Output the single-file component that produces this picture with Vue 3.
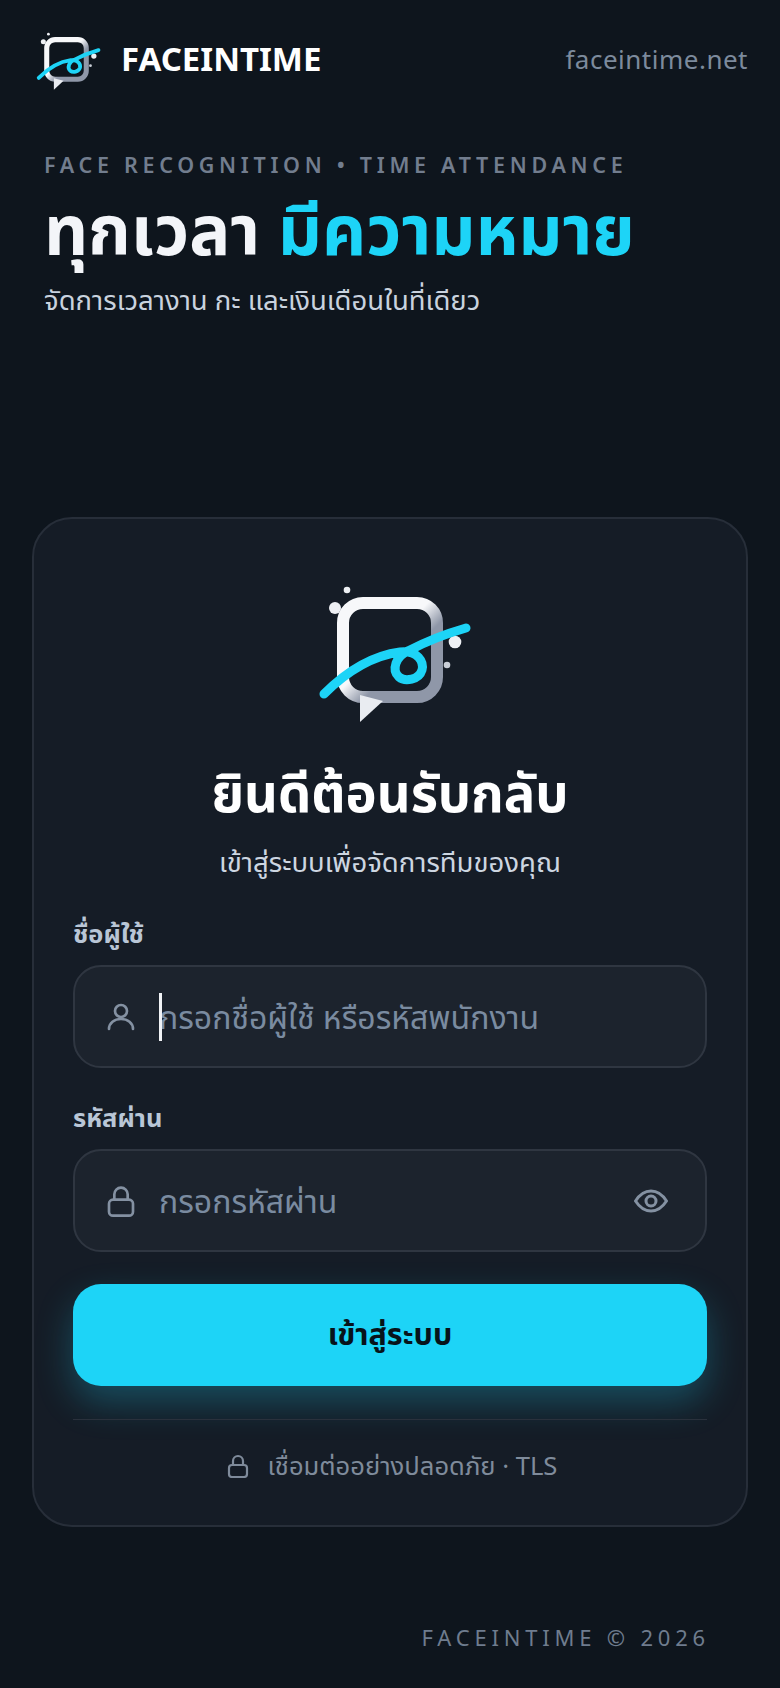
<script setup>
import { ref } from 'vue';

const username = ref('');
const password = ref('');
const showPassword = ref(false);
</script>

<template>
  <div class="page">
    <header class="topbar">
      <div class="brand">
        <svg class="logo-small" viewBox="8 15 164 140" xmlns="http://www.w3.org/2000/svg">
          <defs>
            <linearGradient id="frameA" x1="0" y1="0" x2="1" y2="1">
              <stop offset="0.45" stop-color="#f7f8fa" />
              <stop offset="0.62" stop-color="#8f97a8" />
            </linearGradient>
          </defs>
          <rect x="43" y="33" width="94" height="94" rx="20" fill="none" stroke="url(#frameA)" stroke-width="12" />
          <path d="M60 125 L83 131 L60 152 Z" fill="#e9ecf1" />
          <circle cx="35" cy="38" r="6" fill="#eef0f4" />
          <circle cx="47" cy="20" r="3.3" fill="#eef0f4" />
          <circle cx="155" cy="72" r="6.3" fill="#eef0f4" />
          <circle cx="147" cy="95" r="3.3" fill="#c9ced7" />
          <path d="M24 124 C44 104 70 86 100 82 C118 80 124 92 122 100 C119 110 105 112 99 107 C91 100 96 86 108 81 C125 72 145 64 166 58" fill="none" stroke="#1dd4f7" stroke-width="9" stroke-linecap="round" />
        </svg>
        <span class="brand-name">FACEINTIME</span>
      </div>
      <span class="domain">faceintime.net</span>
    </header>

    <section class="hero">
      <p class="eyebrow">FACE RECOGNITION • TIME ATTENDANCE</p>
      <h1 class="headline">ทุกเวลา <span class="accent">มีความหมาย</span></h1>
      <p class="tagline">จัดการเวลางาน กะ และเงินเดือนในที่เดียว</p>
    </section>

    <main class="card">
      <svg class="logo-big" viewBox="8 15 164 140" xmlns="http://www.w3.org/2000/svg">
        <defs>
          <linearGradient id="frameB" x1="0" y1="0" x2="1" y2="1">
            <stop offset="0.45" stop-color="#f7f8fa" />
            <stop offset="0.62" stop-color="#8f97a8" />
          </linearGradient>
        </defs>
        <rect x="43" y="33" width="94" height="94" rx="20" fill="none" stroke="url(#frameB)" stroke-width="12" />
        <path d="M60 125 L83 131 L60 152 Z" fill="#e9ecf1" />
        <circle cx="35" cy="38" r="6" fill="#eef0f4" />
        <circle cx="47" cy="20" r="3.3" fill="#eef0f4" />
        <circle cx="155" cy="72" r="6.3" fill="#eef0f4" />
        <circle cx="147" cy="95" r="3.3" fill="#c9ced7" />
        <path d="M24 124 C44 104 70 86 100 82 C118 80 124 92 122 100 C119 110 105 112 99 107 C91 100 96 86 108 81 C125 72 145 64 166 58" fill="none" stroke="#1dd4f7" stroke-width="9" stroke-linecap="round" />
      </svg>

      <h2 class="welcome">ยินดีต้อนรับกลับ</h2>
      <p class="welcome-sub">เข้าสู่ระบบเพื่อจัดการทีมของคุณ</p>

      <label class="field-label">ชื่อผู้ใช้</label>
      <div class="field">
        <svg class="field-icon" viewBox="0 0 24 24" fill="none" stroke="currentColor" stroke-width="2" stroke-linecap="round" stroke-linejoin="round">
          <circle cx="12" cy="7.500" r="4.500" />
          <path d="M3 21c0-4.500 4-7.500 9-7.500s9 3 9 7.500" />
        </svg>
        <span class="caret"></span>
        <input v-model="username" type="text" placeholder="กรอกชื่อผู้ใช้ หรือรหัสพนักงาน" />
      </div>

      <label class="field-label second">รหัสผ่าน</label>
      <div class="field">
        <svg class="field-icon" viewBox="0 0 24 24" fill="none" stroke="currentColor" stroke-width="2" stroke-linecap="round" stroke-linejoin="round">
          <rect x="3" y="11" width="18" height="12" rx="3" />
          <path d="M7 11V7a5 5 0 0 1 10 0v4" />
        </svg>
        <input v-model="password" :type="showPassword ? 'text' : 'password'" placeholder="กรอกรหัสผ่าน" />
        <button class="eye" type="button" @click="showPassword = !showPassword">
          <svg viewBox="0 0 34 24" fill="none" stroke="currentColor" stroke-width="3" stroke-linejoin="round">
            <path d="M1.500 12C6 5 11 2 17 2s11 3 15.500 10C28 19 23 22 17 22S6 19 1.500 12Z" />
            <circle cx="17" cy="12" r="5" />
          </svg>
        </button>
      </div>

      <button class="submit" type="button">เข้าสู่ระบบ</button>

      <div class="secure">
        <svg class="secure-icon" viewBox="0 0 24 24" fill="none" stroke="currentColor" stroke-width="2.200" stroke-linecap="round" stroke-linejoin="round">
          <rect x="3" y="11" width="18" height="12" rx="3" />
          <path d="M7 11V7a5 5 0 0 1 10 0v4" />
        </svg>
        <span>เชื่อมต่ออย่างปลอดภัย · TLS</span>
      </div>
    </main>

    <footer class="copyright">FACEINTIME © 2026</footer>
  </div>
</template>

<style>
html,
body {
  margin: 0;
  background: #0e151d;
}
</style>

<style scoped>
.page {
  width: 780px;
  height: 1688px;
  box-sizing: border-box;
  padding: 32px 32px 0;
  display: flex;
  flex-direction: column;
  overflow: hidden;
  background: #0e151d;
  font-family: "Noto Sans", "Noto Sans Thai", "Open Sans", sans-serif;
}

.topbar {
  display: flex;
  align-items: center;
  justify-content: space-between;
}

.brand {
  display: flex;
  align-items: center;
  gap: 20px;
}

.logo-small {
  width: 69px;
  height: 59px;
}

.brand-name {
  margin-bottom: 6px;
  font-size: 33px;
  font-weight: 700;
  color: #ffffff;
}

.domain {
  margin-bottom: 6px;
  font-size: 26px;
  letter-spacing: 0.5px;
  color: #7c8a9c;
}

.hero {
  margin-top: 60px;
  padding-left: 12px;
}

.eyebrow {
  margin: 0;
  font-size: 21.5px;
  line-height: 28px;
  font-weight: 600;
  letter-spacing: 4.7px;
  color: #727d8e;
}

.headline {
  margin: 8px 0 0;
  font-size: 68.5px;
  line-height: 84px;
  font-weight: 700;
  color: #f3f5f9;
}

.accent {
  color: #1dd4f7;
}

.tagline {
  margin: 10px 0 0;
  font-size: 27.5px;
  line-height: 38px;
  color: #c9d2de;
}

.card {
  margin-top: 198px;
  height: 1010px;
  box-sizing: border-box;
  padding: 66px 39px 0;
  display: flex;
  flex-direction: column;
  border: 2px solid #272e39;
  border-radius: 40px;
  background: #151c26;
}

.logo-big {
  flex: none;
  align-self: center;
  width: 164px;
  height: 140px;
}

.welcome {
  margin: 32px 0 0;
  text-align: center;
  font-size: 52.5px;
  line-height: 70px;
  font-weight: 700;
  color: #ffffff;
}

.welcome-sub {
  margin: 16px 0 0;
  text-align: center;
  font-size: 27.5px;
  line-height: 38px;
  color: #cdd6e1;
}

.field-label {
  margin-top: 35px;
  font-size: 25.5px;
  line-height: 34px;
  font-weight: 700;
  color: #b9c6d6;
}

.field-label.second {
  margin-top: 32px;
}

.field {
  position: relative;
  flex: none;
  margin-top: 15px;
  height: 103px;
  box-sizing: border-box;
  padding: 0 30px;
  display: flex;
  align-items: center;
  gap: 22px;
  border: 2px solid #2f3641;
  border-radius: 28px;
  background: #1c232d;
}

.field-icon {
  flex: none;
  width: 32px;
  height: 32px;
  color: #8491a2;
}

.caret {
  position: absolute;
  left: 84px;
  top: 26px;
  width: 3px;
  height: 48px;
  background: #f0f2f5;
}

.field input {
  flex: 1;
  min-width: 0;
  border: none;
  outline: none;
  padding: 0;
  background: transparent;
  font-family: inherit;
  font-size: 32px;
  color: #f0f2f5;
}

.field input::placeholder {
  color: #7a8ba0;
  opacity: 1;
}

.eye {
  flex: none;
  margin-right: 7px;
  padding: 0;
  border: none;
  background: none;
  color: #8491a2;
  display: flex;
}

.eye svg {
  width: 34px;
  height: 24px;
}

.submit {
  margin-top: 32px;
  height: 102px;
  flex: none;
  border: none;
  border-radius: 28px;
  background: #1dd4f7;
  box-shadow: 0 16px 36px rgba(29, 212, 247, 0.27);
  font-family: inherit;
  font-size: 30.5px;
  font-weight: 700;
  color: #07131a;
}

.secure {
  margin-top: 33px;
  padding: 28px 0 0 3px;
  border-top: 1px solid #2a313c;
  display: flex;
  align-items: center;
  justify-content: center;
  gap: 18px;
  font-size: 25.6px;
  line-height: 36px;
  color: #7f8b9b;
}

.secure-icon {
  width: 24px;
  height: 24px;
}

.copyright {
  margin-top: 95px;
  padding-right: 38px;
  text-align: right;
  font-size: 22px;
  line-height: 30px;
  letter-spacing: 4.8px;
  color: #6f7c8e;
}
</style>
